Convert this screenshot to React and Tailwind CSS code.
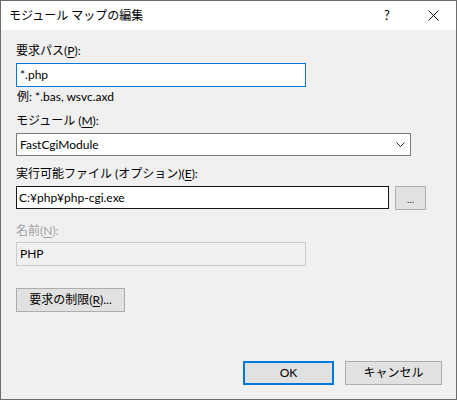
import React from 'react';

const font = { fontFamily: 'Lato, "Noto Sans CJK JP", sans-serif' };

function Ul({ children }) {
  return <span className="underline underline-offset-2">{children}</span>;
}

export default function App() {
  return (
    <div className="w-[457px] h-[401px] bg-white" style={font}>
      <div className="w-[457px] h-[400px] border border-[#6d6d6d] flex flex-col text-[12px] text-black">
        {/* Title bar */}
        <div className="h-[29px] bg-white flex items-center shrink-0">
          <div className="pl-[8px] flex-1 pt-[1px]">モジュール マップの編集</div>
          <div className="w-[46px] h-full flex items-center justify-center text-[13px] pt-[1px]">?</div>
          <div className="w-[46px] h-full flex items-center justify-center">
            <svg width="11" height="11" viewBox="0 0 11 11">
              <path d="M0.5 0.5 L10.5 10.5 M10.5 0.5 L0.5 10.5" stroke="#111" strokeWidth="1" fill="none" />
            </svg>
          </div>
        </div>

        {/* Body */}
        <div className="flex-1 bg-[#f0f0f0] pl-[15px] pr-[14px] flex flex-col">
          <div className="mt-[13px] h-[16px] leading-[16px]">
            要求パス(<Ul>P</Ul>):
          </div>
          <div className="mt-[4px] w-[290px] h-[24px] bg-white border border-[#0078d7] px-[3px] flex items-center">
            *.php
          </div>
          <div className="mt-[2px] h-[16px] leading-[16px] pl-[1px]">例: *.bas, wsvc.axd</div>

          <div className="mt-[8px] h-[16px] leading-[16px]">
            モジュール (<Ul>M</Ul>):
          </div>
          <div className="mt-[4px] w-[395px] h-[23px] bg-white border border-[#7a7a7a] pl-[3px] pr-[5px] flex items-center justify-between">
            <span>FastCgiModule</span>
            <svg width="9" height="6" viewBox="0 0 9 6">
              <path d="M0.5 0.5 L4.5 4.5 L8.5 0.5" stroke="#333" strokeWidth="1" fill="none" />
            </svg>
          </div>

          <div className="mt-[10px] h-[16px] leading-[16px]">
            実行可能ファイル (オプション)(<Ul>E</Ul>):
          </div>
          <div className="mt-[4px] flex items-start gap-[6px]">
            <div className="w-[373px] h-[23px] bg-white border border-[#171717] px-[2px] flex items-center">
              C:¥php¥php-cgi.exe
            </div>
            <div className="w-[31px] h-[24px] bg-[#e1e1e1] border border-[#adadad] flex items-center justify-center text-[10px] text-[#333] pt-[2px]">
              ...
            </div>
          </div>

          <div className="mt-[13px] h-[16px] leading-[16px] text-[#a0a0a0]">
            名前(<Ul>N</Ul>):
          </div>
          <div className="mt-[3px] w-[290px] h-[24px] bg-[#f0f0f0] border border-[#cccccc] px-[3px] flex items-center">
            PHP
          </div>

          <div className="mt-[22px] w-[109px] h-[24px] bg-[#e1e1e1] border border-[#adadad] flex items-center justify-center">
            要求の制限(<Ul>R</Ul>)...
          </div>

          <div className="mt-auto mb-[14px] flex justify-end gap-[11px]">
            <div className="w-[91px] h-[24px] bg-[#e1e1e1] border-2 border-[#0078d7] flex items-center justify-center">
              OK
            </div>
            <div className="w-[97px] h-[24px] bg-[#e1e1e1] border border-[#adadad] flex items-center justify-center">
              キャンセル
            </div>
          </div>
        </div>
      </div>
    </div>
  );
}
